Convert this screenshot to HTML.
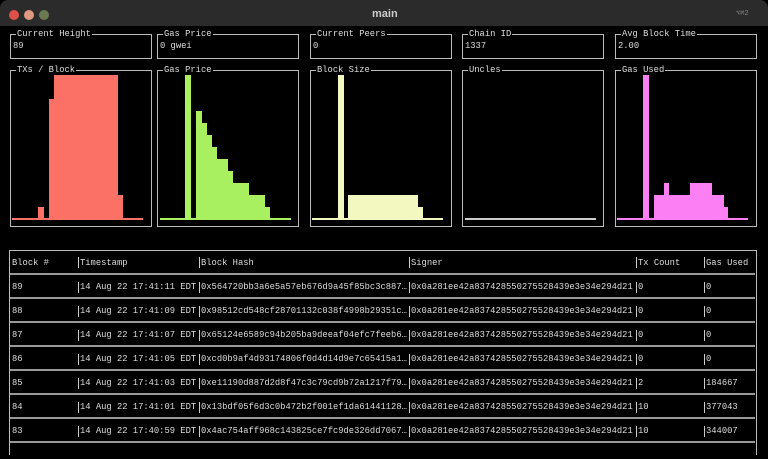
<!DOCTYPE html><html><head><style>
*{margin:0;padding:0;box-sizing:border-box}
body{width:768px;height:459px;background:#000;overflow:hidden;position:relative;font-family:"Liberation Mono",monospace;font-size:8.8px;color:#ddd}
.tb{position:absolute;left:0;top:0;width:768px;height:26px;background:#2b2b2b;border-radius:8px 8px 0 0}
.dot{position:absolute;top:10px;width:10px;height:10px;border-radius:50%}
.box{position:absolute;border:1px solid #bbb}
.lbl{position:absolute;top:-6px;left:5px;background:#000;padding:0 1px;line-height:10px;color:#ddd}
.val{position:absolute;left:2px;top:6px;line-height:10px}
.b{position:absolute}
.t{position:absolute;line-height:10px;white-space:pre}
.hl{position:absolute;left:10px;width:745px;height:2px;background:#999}
.vl{position:absolute;width:1px;background:#ccc;height:11px}
</style></head><body>
<div class="tb"></div>
<div class="dot" style="left:9px;background:#e0504a"></div>
<div class="dot" style="left:24px;background:#e09a80"></div>
<div class="dot" style="left:39px;background:#6a7a50"></div>
<div class="t" style="left:372px;top:9px;font-family:'Liberation Sans',sans-serif;font-weight:bold;font-size:11px;color:#ccc">main</div>
<div class="t" style="left:736px;top:9px;font-size:7px;color:#888">⌥⌘2</div>

<div class="box" style="left:10px;top:34px;width:142px;height:25px"><span class="lbl">Current Height</span><span class="val">89</span></div>
<div class="box" style="left:157px;top:34px;width:142px;height:25px"><span class="lbl">Gas Price</span><span class="val">0 gwei</span></div>
<div class="box" style="left:310px;top:34px;width:142px;height:25px"><span class="lbl">Current Peers</span><span class="val">0</span></div>
<div class="box" style="left:462px;top:34px;width:142px;height:25px"><span class="lbl">Chain ID</span><span class="val">1337</span></div>
<div class="box" style="left:615px;top:34px;width:142px;height:25px"><span class="lbl">Avg Block Time</span><span class="val">2.00</span></div>

<div class="box" style="left:10px;top:70px;width:142px;height:157px"><span class="lbl">TXs / Block</span></div>
<div class="box" style="left:157px;top:70px;width:142px;height:157px"><span class="lbl">Gas Price</span></div>
<div class="box" style="left:310px;top:70px;width:142px;height:157px"><span class="lbl">Block Size</span></div>
<div class="box" style="left:462px;top:70px;width:142px;height:157px"><span class="lbl">Uncles</span></div>
<div class="box" style="left:615px;top:70px;width:142px;height:157px"><span class="lbl">Gas Used</span></div>

<!-- TXs -->
<div class="b" style="background:#fc7165;left:12px;top:218px;width:131px;height:2px"></div>
<div class="b" style="background:#fc7165;left:38px;top:207px;width:6px;height:12px"></div>
<div class="b" style="background:#fc7165;left:49px;top:99px;width:6px;height:120px"></div>
<div class="b" style="background:#fc7165;left:54px;top:75px;width:64px;height:144px"></div>
<div class="b" style="background:#fc7165;left:117px;top:195px;width:6px;height:24px"></div>
<!-- Gas price -->
<div class="b" style="background:#a8f060;left:160px;top:218px;width:131px;height:2px"></div>
<div class="b" style="background:#a8f060;left:185px;top:75px;width:6px;height:144px"></div>
<div class="b" style="background:#a8f060;left:196px;top:111px;width:6px;height:108px"></div>
<div class="b" style="background:#a8f060;left:201px;top:123px;width:6px;height:96px"></div>
<div class="b" style="background:#a8f060;left:206px;top:135px;width:6px;height:84px"></div>
<div class="b" style="background:#a8f060;left:211px;top:147px;width:6px;height:72px"></div>
<div class="b" style="background:#a8f060;left:216px;top:159px;width:12px;height:60px"></div>
<div class="b" style="background:#a8f060;left:227px;top:171px;width:6px;height:48px"></div>
<div class="b" style="background:#a8f060;left:232px;top:183px;width:17px;height:36px"></div>
<div class="b" style="background:#a8f060;left:248px;top:195px;width:17px;height:24px"></div>
<div class="b" style="background:#a8f060;left:264px;top:207px;width:6px;height:12px"></div>
<!-- Block size -->
<div class="b" style="background:#f2f8c0;left:312px;top:218px;width:131px;height:2px"></div>
<div class="b" style="background:#f2f8c0;left:338px;top:75px;width:6px;height:144px"></div>
<div class="b" style="background:#f2f8c0;left:348px;top:195px;width:70px;height:24px"></div>
<div class="b" style="background:#f2f8c0;left:417px;top:207px;width:6px;height:12px"></div>
<!-- Uncles -->
<div class="b" style="background:#ccc;left:465px;top:218px;width:131px;height:2px"></div>
<!-- Gas used -->
<div class="b" style="background:#fc80f4;left:617px;top:218px;width:131px;height:2px"></div>
<div class="b" style="background:#fc80f4;left:643px;top:75px;width:6px;height:144px"></div>
<div class="b" style="background:#fc80f4;left:654px;top:195px;width:70px;height:24px"></div>
<div class="b" style="background:#fc80f4;left:664px;top:183px;width:5px;height:12px"></div>
<div class="b" style="background:#fc80f4;left:690px;top:183px;width:22px;height:12px"></div>
<div class="b" style="background:#fc80f4;left:722px;top:207px;width:6px;height:12px"></div>

<!-- table -->
<div class="box" style="left:9px;top:250px;width:748px;height:205px;border-bottom:none"></div>
<div class="t" style="left:12px;top:258px">Block #</div>
<div class="t" style="left:80px;top:258px">Timestamp</div>
<div class="t" style="left:201px;top:258px">Block Hash</div>
<div class="t" style="left:411px;top:258px">Signer</div>
<div class="t" style="left:638px;top:258px">Tx Count</div>
<div class="t" style="left:706px;top:258px">Gas Used</div>
<div class="vl" style="left:78px;top:257px"></div><div class="vl" style="left:199px;top:257px"></div><div class="vl" style="left:409px;top:257px"></div><div class="vl" style="left:636px;top:257px"></div><div class="vl" style="left:704px;top:257px"></div>

<div class="hl" style="top:273px"></div><div class="hl" style="top:297px"></div><div class="hl" style="top:321px"></div><div class="hl" style="top:345px"></div><div class="hl" style="top:369px"></div><div class="hl" style="top:393px"></div><div class="hl" style="top:417px"></div><div class="hl" style="top:441px"></div>

<div style="position:absolute;left:0;top:282px">
<div class="t" style="left:12px;top:0">89</div><div class="t" style="left:80px;top:0">14 Aug 22 17:41:11 EDT</div><div class="t" style="left:201px;top:0">0x564720bb3a6e5a57eb676d9a45f85bc3c887…</div><div class="t" style="left:411px;top:0">0x0a281ee42a837428550275528439e3e34e294d21</div><div class="t" style="left:638px;top:0">0</div><div class="t" style="left:706px;top:0">0</div>
<div class="t" style="left:12px;top:24px">88</div><div class="t" style="left:80px;top:24px">14 Aug 22 17:41:09 EDT</div><div class="t" style="left:201px;top:24px">0x98512cd548cf28701132c038f4998b29351c…</div><div class="t" style="left:411px;top:24px">0x0a281ee42a837428550275528439e3e34e294d21</div><div class="t" style="left:638px;top:24px">0</div><div class="t" style="left:706px;top:24px">0</div>
<div class="t" style="left:12px;top:48px">87</div><div class="t" style="left:80px;top:48px">14 Aug 22 17:41:07 EDT</div><div class="t" style="left:201px;top:48px">0x65124e6589c94b205ba9deeaf04efc7feeb6…</div><div class="t" style="left:411px;top:48px">0x0a281ee42a837428550275528439e3e34e294d21</div><div class="t" style="left:638px;top:48px">0</div><div class="t" style="left:706px;top:48px">0</div>
<div class="t" style="left:12px;top:72px">86</div><div class="t" style="left:80px;top:72px">14 Aug 22 17:41:05 EDT</div><div class="t" style="left:201px;top:72px">0xcd0b9af4d93174806f0d4d14d9e7c65415a1…</div><div class="t" style="left:411px;top:72px">0x0a281ee42a837428550275528439e3e34e294d21</div><div class="t" style="left:638px;top:72px">0</div><div class="t" style="left:706px;top:72px">0</div>
<div class="t" style="left:12px;top:96px">85</div><div class="t" style="left:80px;top:96px">14 Aug 22 17:41:03 EDT</div><div class="t" style="left:201px;top:96px">0xe11190d887d2d8f47c3c79cd9b72a1217f79…</div><div class="t" style="left:411px;top:96px">0x0a281ee42a837428550275528439e3e34e294d21</div><div class="t" style="left:638px;top:96px">2</div><div class="t" style="left:706px;top:96px">184667</div>
<div class="t" style="left:12px;top:120px">84</div><div class="t" style="left:80px;top:120px">14 Aug 22 17:41:01 EDT</div><div class="t" style="left:201px;top:120px">0x13bdf05f6d3c0b472b2f001ef1da61441128…</div><div class="t" style="left:411px;top:120px">0x0a281ee42a837428550275528439e3e34e294d21</div><div class="t" style="left:638px;top:120px">10</div><div class="t" style="left:706px;top:120px">377043</div>
<div class="t" style="left:12px;top:144px">83</div><div class="t" style="left:80px;top:144px">14 Aug 22 17:40:59 EDT</div><div class="t" style="left:201px;top:144px">0x4ac754aff968c143825ce7fc9de326dd7067…</div><div class="t" style="left:411px;top:144px">0x0a281ee42a837428550275528439e3e34e294d21</div><div class="t" style="left:638px;top:144px">10</div><div class="t" style="left:706px;top:144px">344007</div>
</div>
<div style="position:absolute;left:0;top:282px">
<div class="vl" style="left:78px;top:0"></div><div class="vl" style="left:199px;top:0"></div><div class="vl" style="left:409px;top:0"></div><div class="vl" style="left:636px;top:0"></div><div class="vl" style="left:704px;top:0"></div>
<div class="vl" style="left:78px;top:24px"></div><div class="vl" style="left:199px;top:24px"></div><div class="vl" style="left:409px;top:24px"></div><div class="vl" style="left:636px;top:24px"></div><div class="vl" style="left:704px;top:24px"></div>
<div class="vl" style="left:78px;top:48px"></div><div class="vl" style="left:199px;top:48px"></div><div class="vl" style="left:409px;top:48px"></div><div class="vl" style="left:636px;top:48px"></div><div class="vl" style="left:704px;top:48px"></div>
<div class="vl" style="left:78px;top:72px"></div><div class="vl" style="left:199px;top:72px"></div><div class="vl" style="left:409px;top:72px"></div><div class="vl" style="left:636px;top:72px"></div><div class="vl" style="left:704px;top:72px"></div>
<div class="vl" style="left:78px;top:96px"></div><div class="vl" style="left:199px;top:96px"></div><div class="vl" style="left:409px;top:96px"></div><div class="vl" style="left:636px;top:96px"></div><div class="vl" style="left:704px;top:96px"></div>
<div class="vl" style="left:78px;top:120px"></div><div class="vl" style="left:199px;top:120px"></div><div class="vl" style="left:409px;top:120px"></div><div class="vl" style="left:636px;top:120px"></div><div class="vl" style="left:704px;top:120px"></div>
<div class="vl" style="left:78px;top:144px"></div><div class="vl" style="left:199px;top:144px"></div><div class="vl" style="left:409px;top:144px"></div><div class="vl" style="left:636px;top:144px"></div><div class="vl" style="left:704px;top:144px"></div>
</div>
</body></html>
